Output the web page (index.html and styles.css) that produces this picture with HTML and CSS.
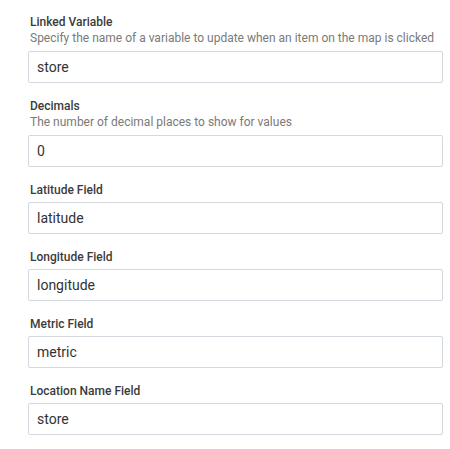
FILE: index.html
```html
<!DOCTYPE html>
<html lang="en">
<head>
<meta charset="utf-8">
<title>Map settings</title>
<link rel="stylesheet" href="styles.css">
</head>
<body>
<form class="form">
  <div class="field">
    <label class="field-label">Linked Variable</label>
    <div class="field-desc">Specify the name of a variable to update when an item on the map is clicked</div>
    <div class="field-input">store</div>
  </div>
  <div class="field">
    <label class="field-label">Decimals</label>
    <div class="field-desc">The number of decimal places to show for values</div>
    <div class="field-input">0</div>
  </div>
  <div class="field">
    <label class="field-label">Latitude Field</label>
    <div class="field-input">latitude</div>
  </div>
  <div class="field">
    <label class="field-label">Longitude Field</label>
    <div class="field-input">longitude</div>
  </div>
  <div class="field">
    <label class="field-label">Metric Field</label>
    <div class="field-input">metric</div>
  </div>
  <div class="field">
    <label class="field-label">Location Name Field</label>
    <div class="field-input">store</div>
  </div>
</form>
</body>
</html>
```
FILE: styles.css
```css
html, body {
  margin: 0;
  background: #ffffff;
}
body {
  font-family: Roboto, "Liberation Sans", sans-serif;
}
.form {
  display: flex;
  flex-direction: column;
  gap: 17px;
  width: 415px;
  padding: 16px 0 0 28px;
}
.field {
  display: flex;
  flex-direction: column;
}
.field-label {
  font-size: 12px;
  font-weight: 500;
  line-height: 12px;
  color: #3b3b3b;
  padding-left: 2px;
}
.field-desc {
  font-size: 12px;
  line-height: 14px;
  color: #7a7a7a;
  padding-left: 2px;
  margin-top: 3px;
  white-space: nowrap;
}
.field-input {
  box-sizing: border-box;
  height: 32px;
  margin-top: 6px;
  padding: 0 8px;
  border: 1px solid #d3d8de;
  border-radius: 2px;
  font-size: 14px;
  line-height: 30px;
  color: #333333;
}
```
